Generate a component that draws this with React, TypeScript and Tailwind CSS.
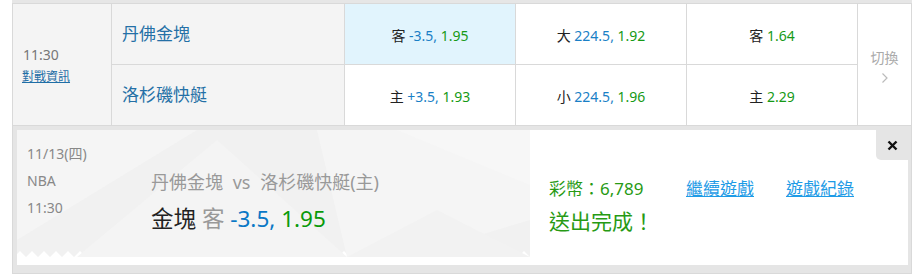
import React from 'react';

const zigzag = (() => {
  const w = 513;
  const step = 12;
  let d = `M0 0 H${w} V127`;
  for (let x = w; x > 0; x -= step) {
    d += ` L${x - step / 2} 121 L${x - step} 127`;
  }
  return d + ' Z';
})();

const Odds: React.FC<{ tag: string; line?: string; price: string }> = ({ tag, line, price }) => (
  <span className="text-[14px]">
    <span className="text-[#222]">{tag}</span>{' '}
    {line && <span className="text-[#1a7fc6]">{line}, </span>}
    <span className="text-[#169a16]">{price}</span>
  </span>
);

const App: React.FC = () => {
  return (
    <div className="w-[919px] h-[277px] bg-white font-['Noto_Sans','Noto_Sans_CJK_TC',sans-serif]">
      <div className="ml-[12px] w-[900px]">
        {/* 上一列的底色 */}
        <div className="h-[3px] bg-[#e6e6e6]" />

        {/* 賽事表格 */}
        <div className="grid grid-cols-[98px_232px_170px_170px_170px_53px] grid-rows-[60px_60px] gap-px bg-[#d9d9d9] border border-[#d9d9d9]">
          <div className="row-span-2 bg-[#f4f4f4] flex flex-col justify-center pl-[10px] pt-[2px]">
            <span className="text-[14px] text-[#777] leading-[22px]">11:30</span>
            <a href="#" className="text-[12px] text-[#1f6ea6] underline leading-[22px] -ml-[1px]">對戰資訊</a>
          </div>
          <div className="bg-[#f4f4f4] flex items-center pl-[10px] text-[17px] text-[#2470a6]">丹佛金塊</div>
          <div className="bg-[#e1f4fd] flex items-center justify-center pt-[3px]">
            <Odds tag="客" line="-3.5" price="1.95" />
          </div>
          <div className="bg-white flex items-center justify-center pt-[3px]">
            <Odds tag="大" line="224.5" price="1.92" />
          </div>
          <div className="bg-white flex items-center justify-center pt-[3px]">
            <Odds tag="客" price="1.64" />
          </div>
          <div className="row-span-2 bg-white flex flex-col items-center justify-center pt-[2px] text-[#aaa]">
            <span className="text-[14px] leading-[20px]">切換</span>
            <svg width="8" height="12" viewBox="0 0 8 12" className="mt-[4px]">
              <polyline points="1.5,1.5 6,6 1.5,10.5" fill="none" stroke="#bbb" strokeWidth="1.2" />
            </svg>
          </div>
          <div className="bg-[#f4f4f4] flex items-center pl-[10px] text-[17px] text-[#2470a6]">洛杉磯快艇</div>
          <div className="bg-white flex items-center justify-center pt-[3px]">
            <Odds tag="主" line="+3.5" price="1.93" />
          </div>
          <div className="bg-white flex items-center justify-center pt-[3px]">
            <Odds tag="小" line="224.5" price="1.96" />
          </div>
          <div className="bg-white flex items-center justify-center pt-[3px]">
            <Odds tag="主" price="2.29" />
          </div>
        </div>

        {/* 投注完成面板 */}
        <div className="border-x border-b border-[#d9d9d9] bg-[#e5e5e5] pl-[4px] pr-[3px] pt-[4px] pb-[8px]">
          <div className="relative flex h-[135px] bg-white">
            {/* 左側彩券 */}
            <div className="relative w-[513px] flex pl-[10px]">
              <svg className="absolute inset-0" width="513" height="135" viewBox="0 0 513 135">
                <path d={zigzag} fill="#f1f1f1" />
                <polygon points="0,0 180,0 0,110" fill="#f5f5f5" />
                <polygon points="60,127 200,10 330,127" fill="#f4f4f4" />
                <polygon points="300,0 513,0 513,90 390,127 330,127" fill="#f5f5f5" />
                <polygon points="380,0 513,0 513,55" fill="#f7f7f7" />
                <polygon points="330,127 420,80 513,127" fill="#f2f2f2" />
              </svg>
              <div className="relative w-[124px] pt-[10px] text-[14px] text-[#888] leading-[27px]">
                <div>11/13(四)</div>
                <div>NBA</div>
                <div>11:30</div>
              </div>
              <div className="relative pt-[40px]">
                <div className="text-[18px] leading-[25px] text-[#999]">
                  丹佛金塊 <span className="mx-[5px]">vs</span> 洛杉磯快艇(主)
                </div>
                <div className="mt-[9px] text-[22.5px] leading-[30px]">
                  <span className="text-[#222]">金塊</span>{' '}
                  <span className="text-[#999]">客</span>{' '}
                  <span className="text-[#0a78c6]">-3.5,</span>{' '}
                  <span className="text-[#0a9a0a]">1.95</span>
                </div>
              </div>
            </div>

            {/* 右側結果 */}
            <div className="pl-[19px] pt-[47px]">
              <div className="flex text-[17px] leading-[24px]">
                <span className="w-[137px] text-[#279a14]">彩幣：6,789</span>
                <a href="#" className="text-[#1e9be6] underline">繼續遊戲</a>
                <a href="#" className="ml-[32px] text-[#1e9be6] underline">遊戲紀錄</a>
              </div>
              <div className="mt-[6px] text-[21px] leading-[28px] text-[#279a14]">送出完成！</div>
            </div>

            <button className="absolute top-0 right-0 w-[32px] h-[30px] bg-[#e5e5e5] rounded-bl-[5px] flex items-center justify-center">
              <svg width="11" height="11" viewBox="0 0 11 11">
                <path d="M1.5 1.5 L9.5 9.5 M9.5 1.5 L1.5 9.5" stroke="#111" strokeWidth="2.4" />
              </svg>
            </button>
          </div>
        </div>
      </div>
    </div>
  );
};

export default App;
